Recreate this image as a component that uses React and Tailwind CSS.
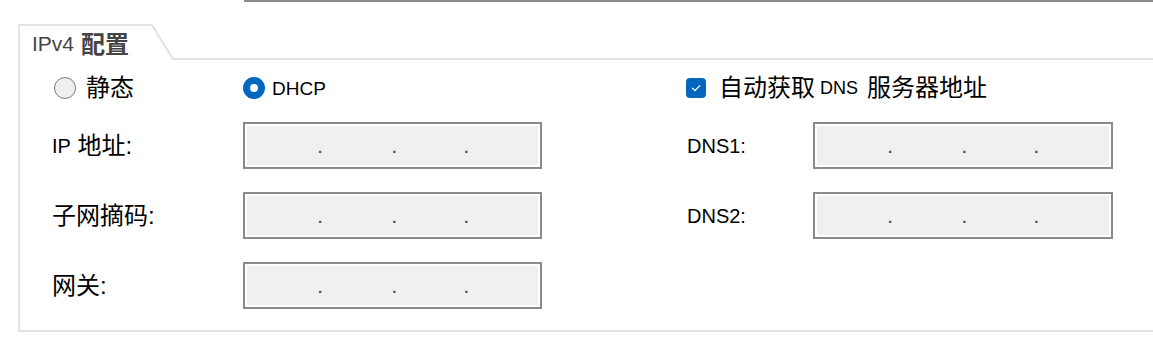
import React from 'react';

function IpBox({ w }) {
  return (
    <div className={`${w} h-[47px] shrink-0 border-2 border-[#8a8a8a] bg-white p-[2px]`}>
      <div className="h-full bg-[#f0f0f0] flex items-center text-[15px] font-bold leading-none text-[#4a4a60] font-['Liberation_Sans',sans-serif]">
        <span className="w-[71px] shrink-0" />
        <span className="mt-[4px]">.</span>
        <span className="w-[70px] shrink-0" />
        <span className="mt-[4px]">.</span>
        <span className="w-[68px] shrink-0" />
        <span className="mt-[4px]">.</span>
      </div>
    </div>
  );
}

function Label({ children, w }) {
  return <div className={`${w} shrink-0 flex items-center text-[24px] leading-none`}>{children}</div>;
}

export default function App() {
  return (
    <div className="w-[1153px] h-[343px] bg-white overflow-hidden text-black font-['Liberation_Sans','Noto_Sans_CJK_SC',sans-serif]">
      <div className="ml-[244px] h-[2px] bg-[#8a8a8a]" />

      <div className="mt-[22px] ml-[18px] h-[308px] border-l-2 border-b-2 border-[#e3e3e3] flex flex-col">
        {/* group title tab */}
        <div className="flex h-[36px] shrink-0">
          <div className="w-[132px] shrink-0 border-t-2 border-[#e3e3e3] pl-[12px] flex items-center text-[#444] leading-none">
            <span className="text-[21px]">IPv4</span>
            <span className="ml-[7px] text-[24px] font-bold font-['Noto_Sans_CJK_SC',sans-serif]">配置</span>
          </div>
          <svg width="21" height="36" className="shrink-0">
            <line x1="0" y1="1" x2="21" y2="35" stroke="#e3e3e3" strokeWidth="2" />
          </svg>
          <div className="flex-1 border-b-2 border-[#e3e3e3]" />
        </div>

        <div className="pl-[32px] flex flex-col">
          {/* mode row */}
          <div className="mt-[10px] h-[36px] flex items-center">
            <div className="w-[191px] shrink-0 flex items-center pl-[2px]">
              <span className="w-[22px] h-[22px] rounded-full border-[1.5px] border-[#7c7c7c] bg-[#efefef]" />
              <span className="ml-[10px] text-[24px] leading-none">静态</span>
            </div>
            <div className="w-[443px] shrink-0 flex items-center">
              <span className="w-[22px] h-[22px] rounded-full bg-[#0067c0] flex items-center justify-center">
                <span className="w-[8px] h-[8px] rounded-full bg-white" />
              </span>
              <span className="ml-[7px] text-[19px] leading-none">DHCP</span>
            </div>
            <div className="flex items-center">
              <span className="w-[20px] h-[20px] rounded-[4px] bg-[#0067c0] flex items-center justify-center">
                <svg width="12" height="12" viewBox="0 0 12 12" fill="none">
                  <path d="M2.5 6.2 L5 8.6 L9.8 3.6" stroke="white" strokeWidth="1.3" strokeLinecap="round" strokeLinejoin="round" />
                </svg>
              </span>
              <span className="ml-[13px] text-[24px] leading-none flex items-center">
                自动获取<span className="ml-[5px] mr-[9px] text-[18px]">DNS</span>服务器地址
              </span>
            </div>
          </div>

          {/* address rows */}
          <div className="mt-[16px] flex items-center">
            <Label w="w-[191px]"><span className="text-[20px]">IP</span>&nbsp;地址:</Label>
            <IpBox w="w-[299px]" />
            <div className="w-[145px] shrink-0" />
            <Label w="w-[126px]"><span className="text-[20px]">DNS1:</span></Label>
            <IpBox w="w-[300px]" />
          </div>

          <div className="mt-[23px] flex items-center">
            <Label w="w-[191px]">子网摘码:</Label>
            <IpBox w="w-[299px]" />
            <div className="w-[145px] shrink-0" />
            <Label w="w-[126px]"><span className="text-[20px]">DNS2:</span></Label>
            <IpBox w="w-[300px]" />
          </div>

          <div className="mt-[23px] flex items-center">
            <Label w="w-[191px]">网关:</Label>
            <IpBox w="w-[299px]" />
          </div>
        </div>
      </div>
    </div>
  );
}
